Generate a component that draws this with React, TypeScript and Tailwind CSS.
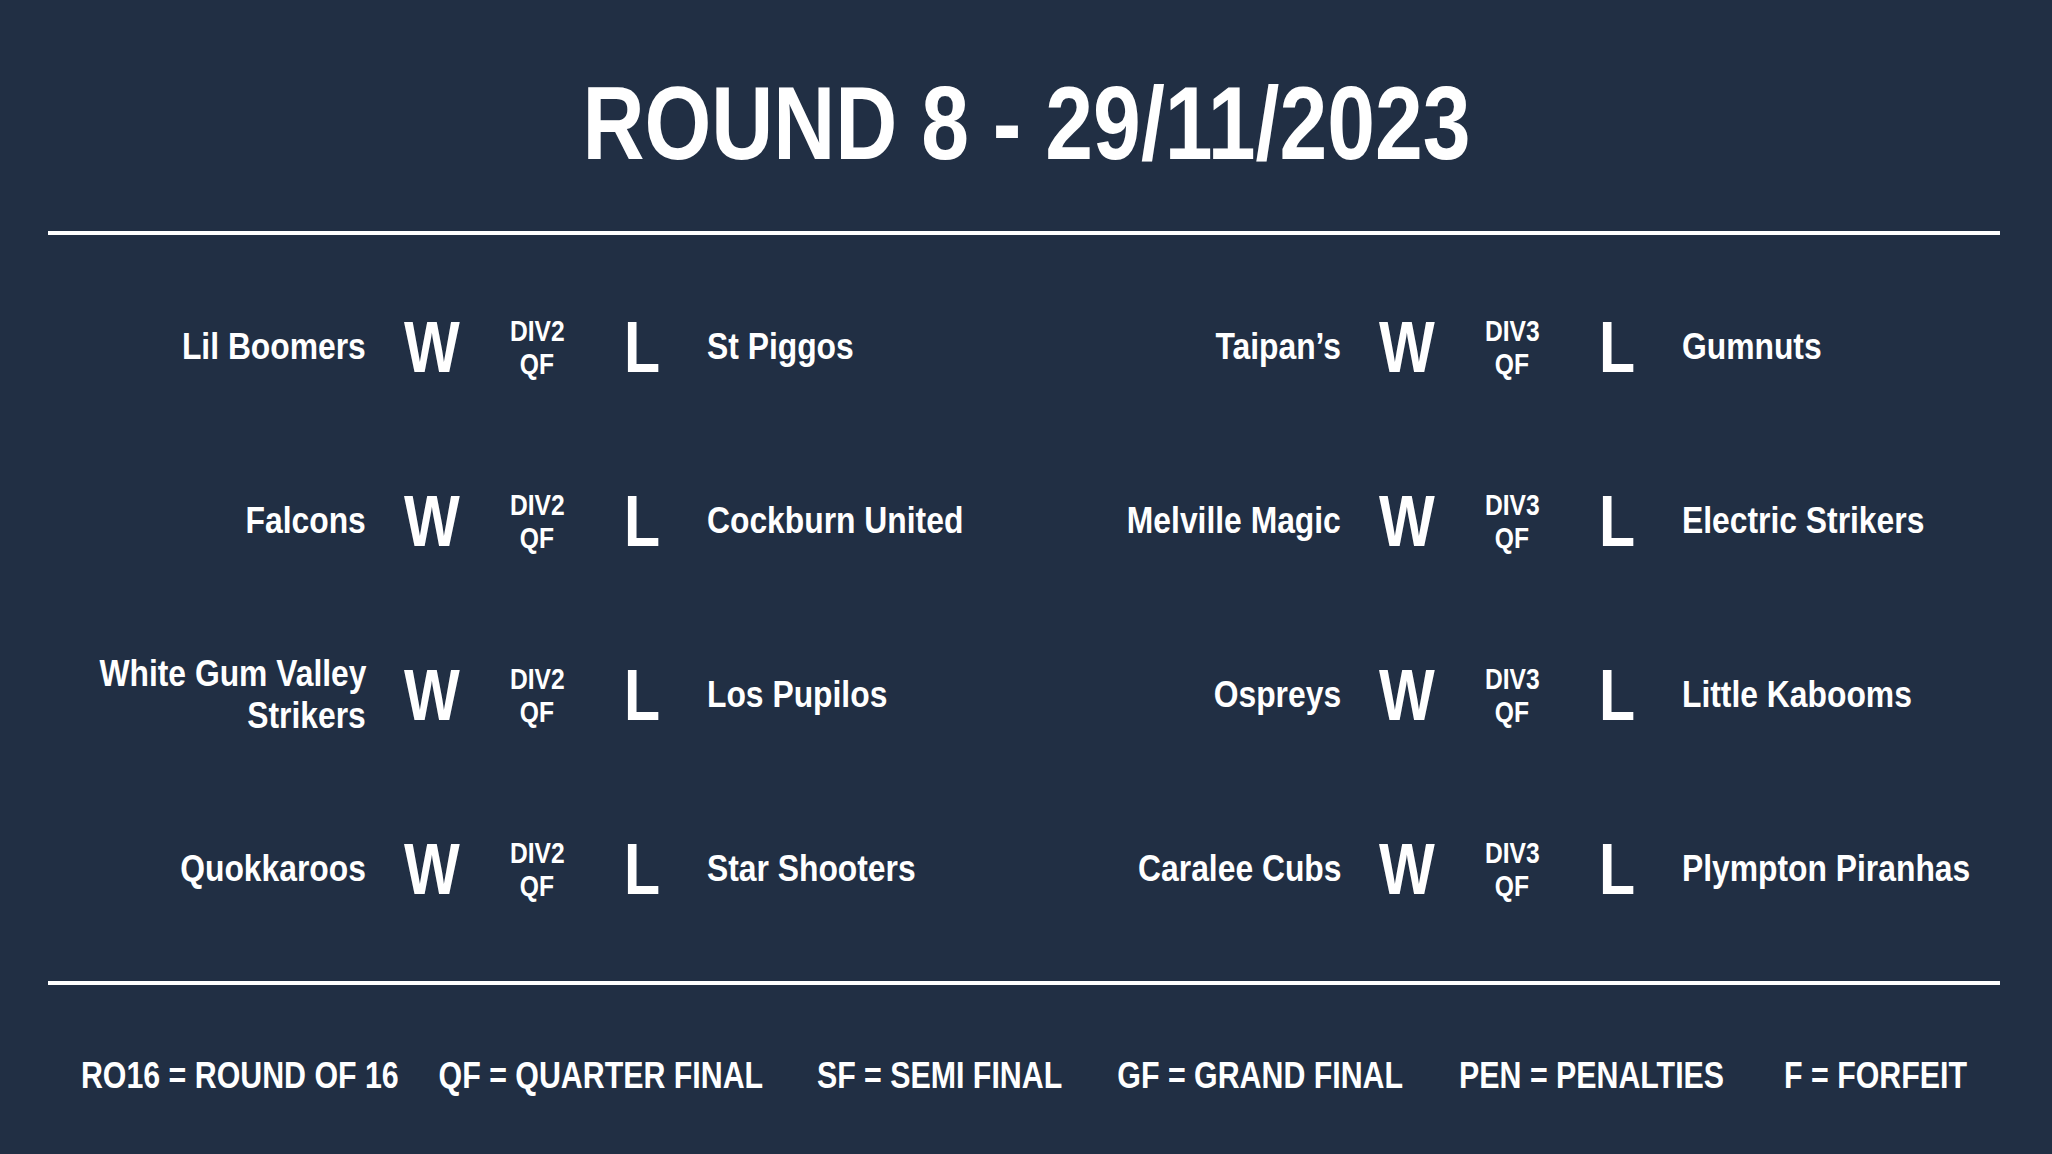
// Liberation Sans squeezed to Arial Narrow proportions stands in for the DIN-style face
const FONT = "font-['Liberation_Sans',Arial,sans-serif]";

type Match = { winner: string[]; loser: string; div: string };

const left: Match[] = [
  { winner: ["Lil Boomers"], loser: "St Piggos", div: "DIV2" },
  { winner: ["Falcons"], loser: "Cockburn United", div: "DIV2" },
  { winner: ["White Gum Valley", "Strikers"], loser: "Los Pupilos", div: "DIV2" },
  { winner: ["Quokkaroos"], loser: "Star Shooters", div: "DIV2" },
];

const right: Match[] = [
  { winner: ["Taipan’s"], loser: "Gumnuts", div: "DIV3" },
  { winner: ["Melville Magic"], loser: "Electric Strikers", div: "DIV3" },
  { winner: ["Ospreys"], loser: "Little Kabooms", div: "DIV3" },
  { winner: ["Caralee Cubs"], loser: "Plympton Piranhas", div: "DIV3" },
];

const legend = [
  { text: "RO16 = ROUND OF 16", w: "w-[321px]", ml: "" },
  { text: "QF = QUARTER FINAL", w: "w-[330px]", ml: "ml-[36px]" },
  { text: "SF = SEMI FINAL", w: "w-[259px]", ml: "ml-[44px]" },
  { text: "GF = GRAND FINAL", w: "w-[297px]", ml: "ml-[43px]" },
  { text: "PEN = PENALTIES", w: "w-[275px]", ml: "ml-[45px]" },
  { text: "F = FORFEIT", w: "w-[188px]", ml: "ml-[53px]" },
];

function MatchRow({ match }: { match: Match }) {
  return (
    <div className="flex items-center w-[975px]">
      <div className="w-[275px] flex flex-col items-end text-[37px] leading-[42px] font-bold whitespace-nowrap">
        {match.winner.map((line) => (
          <span key={line} className="inline-block scale-x-[0.86] origin-right">
            {line}
          </span>
        ))}
      </div>
      <div className="w-[132px] flex justify-center text-[72px] leading-none font-bold">
        <span className="inline-block scale-x-[0.82]">W</span>
      </div>
      <div className="w-[78px] flex flex-col items-center text-[30px] leading-[33px] font-bold">
        <span className="inline-block scale-x-[0.82]">{match.div}</span>
        <span className="inline-block scale-x-[0.82]">QF</span>
      </div>
      <div className="w-[131px] flex justify-center text-[72px] leading-none font-bold">
        <span className="inline-block scale-x-[0.82]">L</span>
      </div>
      <div className="w-[359px] text-[37px] leading-[42px] font-bold whitespace-nowrap">
        <span className="inline-block scale-x-[0.86] origin-left">{match.loser}</span>
      </div>
    </div>
  );
}

export default function App() {
  return (
    <div className={`w-[2052px] h-[1154px] bg-[#212f44] text-white overflow-hidden ${FONT}`}>
      <h1 className="pt-[72px] flex justify-center text-[103px] leading-none font-bold whitespace-nowrap">
        <span className="inline-block scale-x-[0.834]">ROUND 8 - 29/11/2023</span>
      </h1>

      <div className="mt-[56px] ml-[48px] w-[1952px] h-[4px] bg-white" />

      <div className="flex pl-[91px] pt-[25px] pb-[25px]">
        <div className="flex flex-col">
          {left.map((m) => (
            <div key={m.loser} className="h-[174px] flex items-center">
              <MatchRow match={m} />
            </div>
          ))}
        </div>
        <div className="flex flex-col">
          {right.map((m) => (
            <div key={m.loser} className="h-[174px] flex items-center">
              <MatchRow match={m} />
            </div>
          ))}
        </div>
      </div>

      <div className="ml-[48px] w-[1952px] h-[4px] bg-white" />

      <div className="mt-[72px] flex pl-[79px] text-[37px] leading-none font-bold whitespace-nowrap">
        {legend.map((item) => (
          <div key={item.text} className={`${item.w} ${item.ml} shrink-0 flex justify-center`}>
            <span className="inline-block scale-x-[0.82]">{item.text}</span>
          </div>
        ))}
      </div>
    </div>
  );
}
